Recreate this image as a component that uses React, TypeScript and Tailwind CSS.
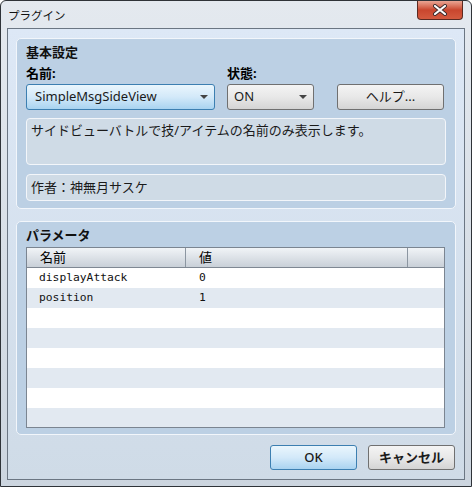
const ui = "font-['Noto_Sans','Noto_Sans_CJK_JP',sans-serif]";
const mono = "font-['DejaVu_Sans_Mono','Noto_Sans_CJK_JP',monospace]";

function GrayButton({ children, blue = false, className = '' }: { children: React.ReactNode; blue?: boolean; className?: string }) {
  return (
    <div
      className={
        'flex items-center rounded-[3px] border text-[13px] text-[#1a1a1a] ' +
        (blue
          ? 'border-[#3c7fb1] bg-gradient-to-b from-[#eaf6fd] via-[#d3e9f9] to-[#a9d3f0] '
          : 'border-[#707070] bg-gradient-to-b from-[#f4f4f4] via-[#e8e8e8] to-[#d4d4d4] ') +
        className
      }
    >
      {children}
    </div>
  );
}

function Caret() {
  return <span className="h-0 w-0 border-x-[4px] border-t-[4px] border-x-transparent border-t-[#444]" />;
}

function Group({ title, children, className = '' }: { title: string; children: React.ReactNode; className?: string }) {
  return (
    <div className={'rounded-[5px] border border-[#f2f6fb] bg-[#bcd0e4] px-[9px] pt-[5px] ' + className}>
      <div className="h-[17px] text-[13px] font-bold leading-[17px] text-[#111]">{title}</div>
      {children}
    </div>
  );
}

export default function App() {
  const params = [
    { name: 'displayAttack', value: '0' },
    { name: 'position', value: '1' },
  ];
  const rows = Array.from({ length: 9 }, (_, i) => params[i]);

  return (
    <div className={'h-[487px] w-[472px] overflow-hidden rounded-t-[6px] border border-[#2f3338] bg-gradient-to-b from-[#e4e9ef] to-[#ccd5df] ' + ui}>
      {/* title bar */}
      <div className="flex h-[27px] items-start justify-between pl-[7px] pr-[8px]">
        <span className="mt-[7px] text-[11.5px] leading-[16px] text-[#111]">プラグイン</span>
        <div className="flex h-[19px] w-[46px] items-center justify-center rounded-b-[4px] border border-t-0 border-[#5b2a22] bg-gradient-to-b from-[#e9a594] via-[#c9462e] to-[#d45a3f]">
          <svg width="16" height="12" viewBox="0 0 16 12">
            <path d="M3 2 L13 10 M13 2 L3 10" stroke="#3a2b2b" strokeWidth="4" strokeLinecap="round" />
            <path d="M3 2 L13 10 M13 2 L3 10" stroke="#fff" strokeWidth="2.2" strokeLinecap="round" />
          </svg>
        </div>
      </div>

      {/* client area */}
      <div className="mx-[6px] h-[452px] border border-[#6b7683] bg-gradient-to-b from-[#dde8f6] to-[#cfdbe7] px-[8px] pt-[9px]">
        <Group title="基本設定" className="h-[171px]">
          <div className="flex">
            <div className="w-[201px]">
              <div className="mt-[4px] h-[17px] text-[13px] font-bold leading-[17px]">名前:</div>
              <GrayButton blue className="mt-[2px] h-[26px] w-[189px] justify-between pl-[8px] pr-[6px]">
                <span>SimpleMsgSideView</span>
                <Caret />
              </GrayButton>
            </div>
            <div className="w-[110px]">
              <div className="mt-[4px] h-[17px] text-[13px] font-bold leading-[17px]">状態:</div>
              <GrayButton className="mt-[2px] h-[26px] w-[87px] justify-between pl-[6px] pr-[6px]">
                <span>ON</span>
                <Caret />
              </GrayButton>
            </div>
            <GrayButton className="mt-[23px] h-[26px] w-[107px] justify-center">ヘルプ...</GrayButton>
          </div>
          <div className="mt-[8px] h-[47px] rounded-[4px] border border-[#f3f6fa] bg-[#cfdbe6] px-[4px] pt-[3px] text-[13px] leading-[17px] text-[#1a1a1a]">
            サイドビューバトルで技/アイテムの名前のみ表示します。
          </div>
          <div className="mt-[9px] flex h-[27px] items-center rounded-[4px] border border-[#f3f6fa] bg-[#cfdbe6] px-[4px] text-[13px] text-[#1a1a1a]">
            作者：神無月サスケ
          </div>
        </Group>

        <Group title="パラメータ" className="mt-[12px] h-[214px]">
          <div className="mt-[3px] h-[181px] w-[419px] overflow-hidden border border-[#7b8591] bg-white">
            <div className="flex h-[20px] border-b border-[#7f8893] bg-gradient-to-b from-[#f1f4f7] to-[#c9d0d8] text-[13px] leading-[19px]">
              <div className="w-[159px] border-r border-[#8c96a1] pl-[13px]">名前</div>
              <div className="w-[222px] border-r border-[#8c96a1] pl-[13px]">値</div>
              <div className="flex-1" />
            </div>
            {rows.map((r, i) => (
              <div key={i} className={'flex h-[20px] items-center text-[11.3px] text-[#111] ' + (i % 2 ? 'bg-[#e2e9f1]' : 'bg-white') + ' ' + mono}>
                <div className="w-[160px] pl-[12px]">{r?.name}</div>
                <div className="pl-[12px]">{r?.value}</div>
              </div>
            ))}
          </div>
        </Group>

        <div className="mt-[10px] flex justify-end gap-[11px] pr-[1px]">
          <GrayButton blue className="h-[25px] w-[87px] justify-center font-medium">OK</GrayButton>
          <GrayButton className="h-[25px] w-[87px] justify-center font-bold">キャンセル</GrayButton>
        </div>
      </div>
    </div>
  );
}
